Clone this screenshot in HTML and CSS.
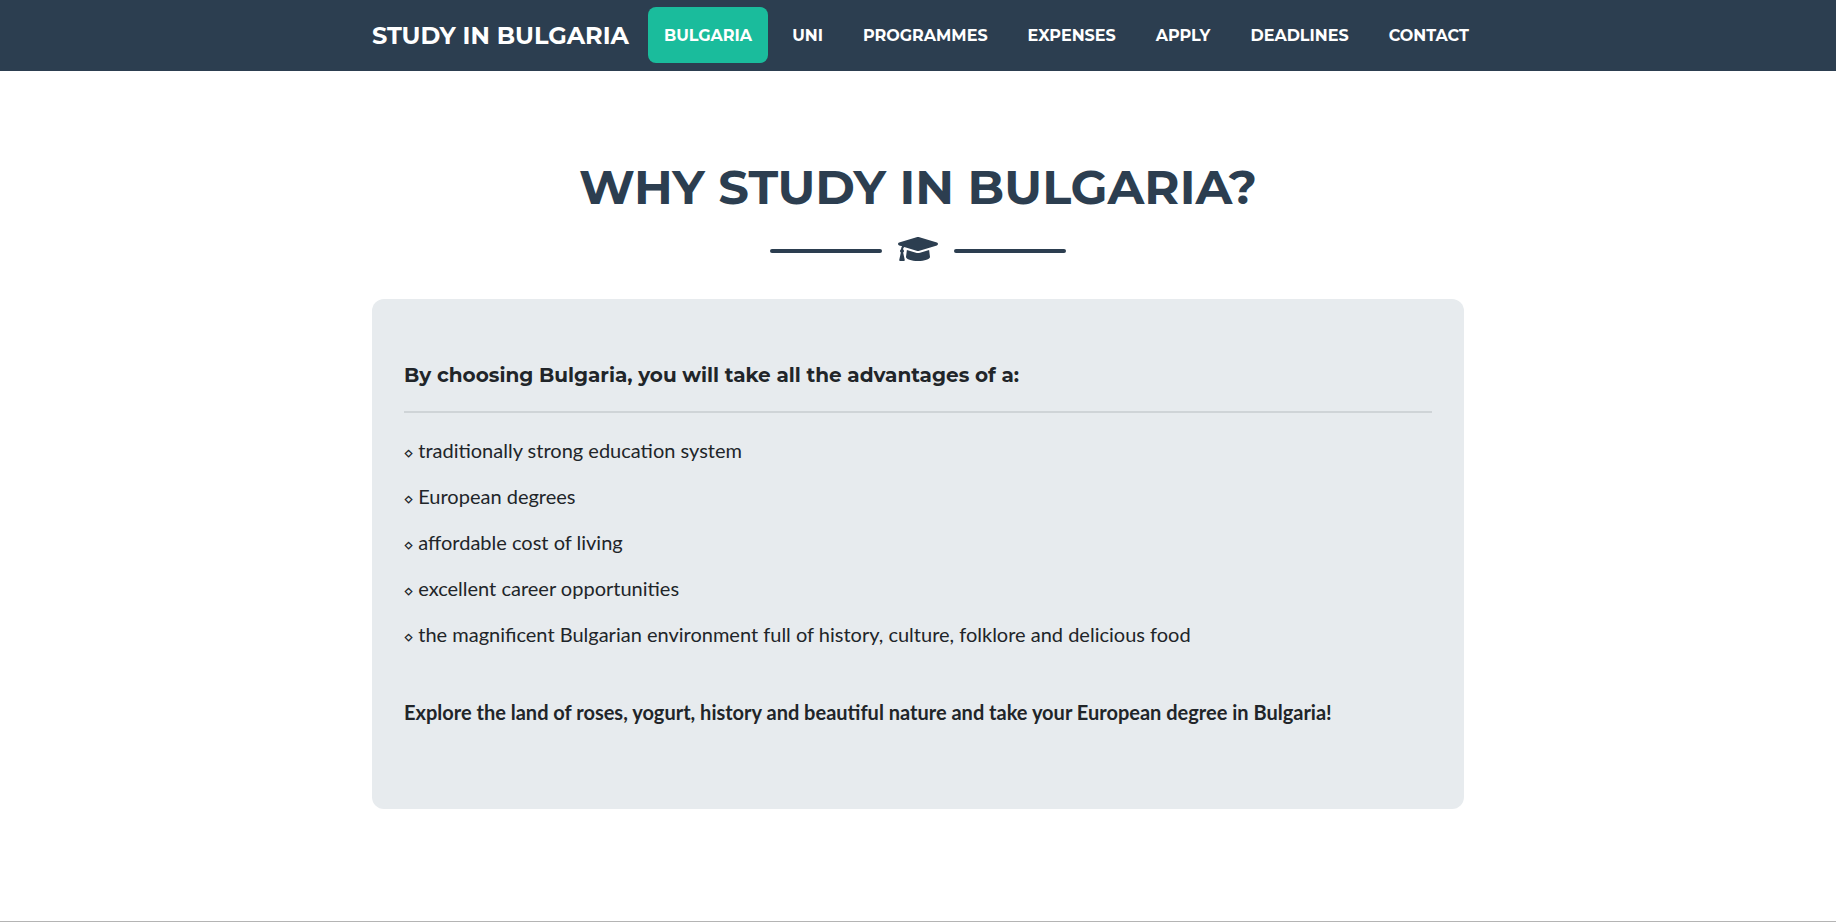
FILE: index.html
```html
<!DOCTYPE html>
<html lang="en">
<head>
<meta charset="utf-8">
<meta name="viewport" content="width=device-width, initial-scale=1">
<title>Study in Bulgaria</title>
<link rel="stylesheet" href="styles.css">
</head>
<body>
<header class="navbar">
  <div class="container navbar-inner">
    <a class="brand" href="#top">STUDY IN BULGARIA</a>
    <nav class="nav">
      <a class="nav-link active" href="#bulgaria">BULGARIA</a>
      <a class="nav-link" href="#uni">UNI</a>
      <a class="nav-link" href="#programmes">PROGRAMMES</a>
      <a class="nav-link" href="#expenses">EXPENSES</a>
      <a class="nav-link" href="#apply">APPLY</a>
      <a class="nav-link" href="#deadlines">DEADLINES</a>
      <a class="nav-link" href="#contact">CONTACT</a>
    </nav>
  </div>
</header>
<main class="section" id="bulgaria">
  <div class="container">
    <h1 class="title">WHY STUDY IN BULGARIA?</h1>
    <div class="divider">
      <span class="divider-line"></span>
      <svg class="divider-icon" viewBox="0 0 640 512" aria-hidden="true"><path fill="currentColor" d="M622.34 153.2L343.4 67.5c-15.2-4.67-31.6-4.67-46.79 0L17.66 153.2c-23.54 7.23-23.54 38.36 0 45.59l48.63 14.94c-10.67 13.19-17.23 29.28-17.88 46.9C38.78 266.15 32 276.11 32 288c0 10.78 5.68 19.85 13.86 25.65L20.33 428.53C18.11 438.52 25.71 448 35.94 448h56.11c10.24 0 17.84-9.48 15.62-19.47L82.14 313.65C90.32 307.85 96 298.78 96 288c0-11.57-6.47-21.25-15.66-26.87.76-15.02 8.44-28.3 20.69-36.72L296.6 284.5c9.06 2.78 26.44 6.25 46.79 0l278.95-85.7c23.55-7.24 23.55-38.36 0-45.6zM352.79 315.09c-28.53 8.76-52.84 3.92-65.59 0l-145.02-44.55L128 384c0 35.35 85.96 64 192 64s192-28.65 192-64l-14.18-113.47-145.03 44.56z"/></svg>
      <span class="divider-line"></span>
    </div>
    <section class="card">
      <h2 class="card-title">By choosing Bulgaria, you will take all the advantages of a:</h2>
      <hr class="rule">
      <ul class="list">
        <li><span class="mark">⋄</span> traditionally strong education system</li>
        <li><span class="mark">⋄</span> European degrees</li>
        <li><span class="mark">⋄</span> affordable cost of living</li>
        <li><span class="mark">⋄</span> excellent career opportunities</li>
        <li><span class="mark">⋄</span> the magnificent Bulgarian environment full of history, culture, folklore and delicious food</li>
      </ul>
      <p class="closing">Explore the land of roses, yogurt, history and beautiful nature and take your European degree in Bulgaria!</p>
    </section>
  </div>
</main>
<div class="next-edge"></div>
</body>
</html>
```
FILE: styles.css
```css
* { box-sizing: border-box; }

body {
  margin: 0;
  background: #fff;
  color: #212529;
  font: 400 20px/30px Lato, "STIX Two Math", math, sans-serif;
}

.container {
  max-width: 1140px;
  margin: 0 auto;
  padding: 0 24px;
}

.navbar {
  background: #2c3e50;
  padding: 7px 0 8px;
}

.navbar-inner {
  display: flex;
  align-items: center;
  gap: 19px;
}

.brand,
.nav-link {
  color: #fff;
  font-family: Montserrat, Inter, sans-serif;
  font-weight: 700;
  text-decoration: none;
  white-space: nowrap;
}

.brand {
  padding-top: 2px;
  font-size: 24px;
}

.nav {
  display: flex;
  gap: 8px;
}

.nav-link {
  padding: 17px 16px 15px;
  border-radius: 8px;
  font-size: 16px;
  line-height: 24px;
}

.nav-link.active { background: #1abc9c; }

.section { padding: 87px 0 112px; }

.title {
  margin: 0;
  color: #2c3e50;
  text-align: center;
  font: 700 48px/58px Montserrat, Inter, sans-serif;
}

.divider {
  display: flex;
  align-items: center;
  justify-content: center;
  gap: 16px;
  margin: 17px 0 30px;
  color: #2c3e50;
}

.divider-line {
  width: 112px;
  height: 4px;
  border-radius: 4px;
  background: currentColor;
}

.divider-icon {
  width: 40px;
  height: 32px;
  margin-bottom: 4px;
}

.card {
  padding: 64px 32px 82px;
  border-radius: 12px;
  background: #e7ebee;
}

.card-title {
  margin: 0;
  font: 700 20px/24px Montserrat, Inter, sans-serif;
}

.rule {
  height: 2px;
  margin: 24px 0 22px;
  border: 0;
  background: #cfd4d7;
}

.list {
  display: grid;
  gap: 16px;
  margin: 0 0 48px;
  padding: 0;
  list-style: none;
}

.mark {
  font-size: 17px;
  line-height: 1;
}

.closing {
  margin: 0;
  font-weight: 700;
}

.next-edge {
  height: 1px;
  background: #b4b4b4;
}
```
